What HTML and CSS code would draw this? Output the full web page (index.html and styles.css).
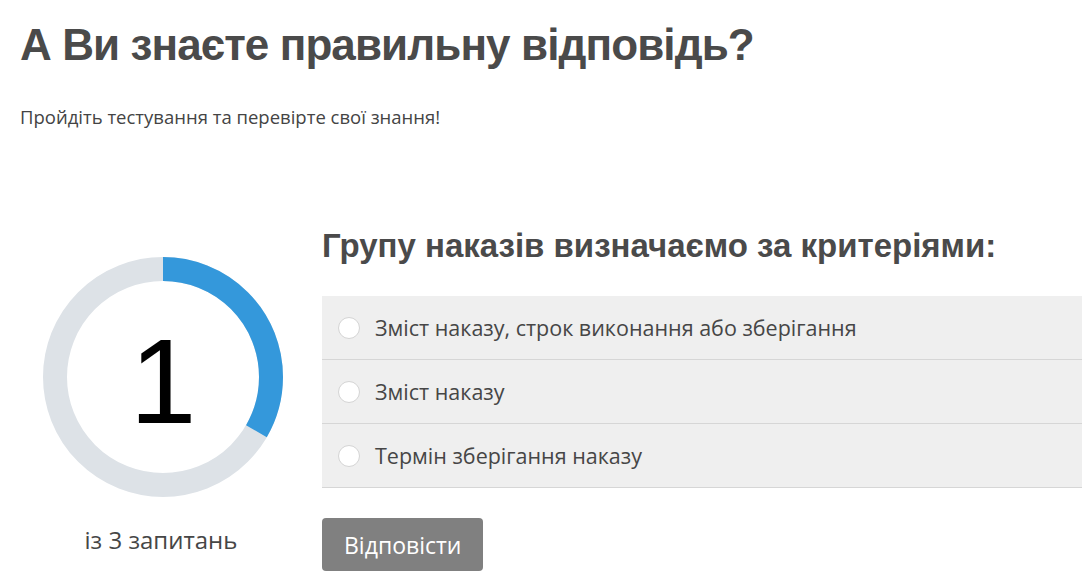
FILE: index.html
```html
<!DOCTYPE html>
<html lang="uk">
<head>
    <meta charset="UTF-8">
    <meta name="viewport" content="width=device-width, initial-scale=1.0">
    <title>Тест</title>
    <link rel="stylesheet" href="styles.css">
</head>
<body>
    <div id="page">
        <h1 class="title">А Ви знаєте правильну відповідь?</h1>
        <p class="lead">Пройдіть тестування та перевірте свої знання!</p>

        <div class="quiz">
            <div class="progress">
                <div class="ring">
                    <svg width="240" height="240" viewBox="0 0 240 240">
                        <circle cx="120" cy="120" r="108" fill="none" stroke="#dde2e7" stroke-width="24"/>
                        <circle cx="120" cy="120" r="108" fill="none" stroke="#3498db" stroke-width="24"
                                stroke-dasharray="226.2 678.6" transform="rotate(-90 120 120)"/>
                    </svg>
                    <span class="ring-num">1</span>
                </div>
                <div class="ring-caption">із 3 запитань</div>
            </div>

            <div class="question">
                <h2 class="question-title">Групу наказів визначаємо за критеріями:</h2>
                <div class="options">
                    <label class="option"><span class="radio"></span>Зміст наказу, строк виконання або зберігання</label>
                    <label class="option"><span class="radio"></span>Зміст наказу</label>
                    <label class="option"><span class="radio"></span>Термін зберігання наказу</label>
                </div>
                <button class="answer-btn">Відповісти</button>
            </div>
        </div>
    </div>
</body>
</html>
```

FILE: styles.css
```css
*{
    margin: 0;
    padding: 0;
    box-sizing: border-box;
}
body{
    background: #fff;
    color: #464646;
    font-family: "Open Sans", "Noto Sans", sans-serif;
    overflow: hidden;
}
#page{
    padding: 18px 0 0 20px;
}
.title{
    font: bold 44px/53px "Liberation Sans", Arial, sans-serif;
    letter-spacing: -0.9px;
    color: #4a4a4a;
}
.lead{
    margin-top: 34px;
    font-size: 18.5px;
    line-height: 24px;
    color: #444;
}

.quiz{
    margin-top: 98px;
    display: flex;
    align-items: flex-start;
}
.progress{
    width: 286px;
    padding-top: 30px;
    display: flex;
    flex-direction: column;
    align-items: center;
}
.ring{
    position: relative;
    width: 240px;
    height: 240px;
}
.ring svg{
    display: block;
}
.ring-num{
    position: absolute;
    inset: 0;
    padding-top: 8px;
    display: flex;
    align-items: center;
    justify-content: center;
    font: 120px/1 "Liberation Sans", Arial, sans-serif;
    color: #000;
}
.ring-caption{
    margin-top: 28px;
    margin-right: 4px;
    font-size: 24px;
    line-height: 30px;
    color: #464646;
}

.question{
    flex: 1;
    margin-left: 16px;
}
.question-title{
    font: bold 33px/38px "Liberation Sans", Arial, sans-serif;
    color: #4a4a4a;
}
.options{
    margin-top: 31px;
    background: #efefef;
}
.option{
    height: 64px;
    display: flex;
    align-items: center;
    padding-left: 16px;
    border-bottom: 1px solid #d6d6d6;
    font-size: 21.5px;
    color: #464646;
    cursor: pointer;
}
.radio{
    width: 22px;
    height: 22px;
    border-radius: 50%;
    background: #fff;
    border: 1px solid #d4d4d4;
    margin-right: 15px;
}
.answer-btn{
    margin-top: 30px;
    height: 53px;
    padding: 0 22px;
    border: none;
    border-radius: 4px;
    background: #808080;
    color: #fff;
    font-family: "Open Sans", "Noto Sans", sans-serif;
    font-size: 23px;
}
```
